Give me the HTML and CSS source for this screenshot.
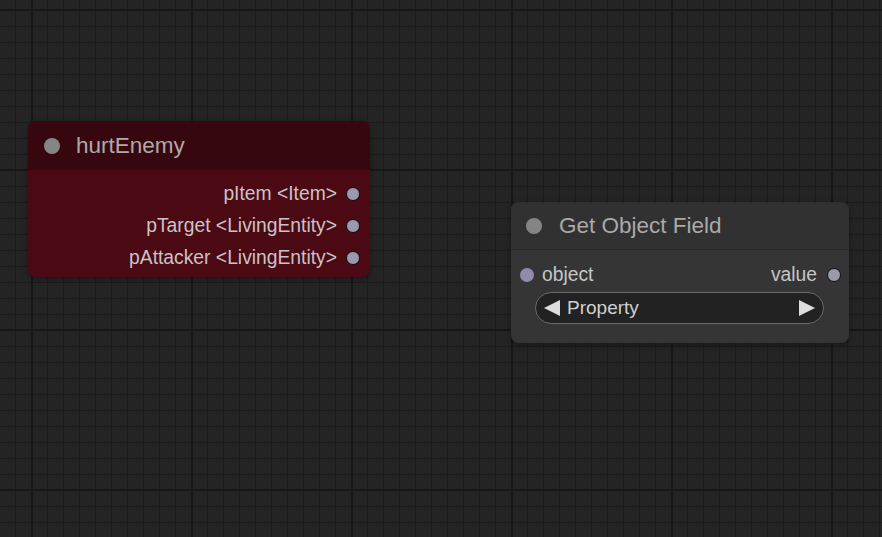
FILE: index.html
```html
<!DOCTYPE html>
<html lang="en">
<head>
    <meta charset="UTF-8">
    <meta name="viewport" content="width=device-width, initial-scale=1.0">
    <title>Graph Editor</title>
    <link rel="stylesheet" href="styles.css">
</head>
<body>
    <!-- Graph Canvas -->
    <div class="canvas">

        <!-- Event node -->
        <div class="node node-event">
            <div class="node-title">
                <span class="title-dot"></span>
                <span class="title-text">hurtEnemy</span>
            </div>
            <div class="node-body">
                <div class="slot slot-out">
                    <span class="slot-label">pItem &lt;Item&gt;</span>
                    <span class="slot-dot"></span>
                </div>
                <div class="slot slot-out">
                    <span class="slot-label">pTarget &lt;LivingEntity&gt;</span>
                    <span class="slot-dot"></span>
                </div>
                <div class="slot slot-out">
                    <span class="slot-label">pAttacker &lt;LivingEntity&gt;</span>
                    <span class="slot-dot"></span>
                </div>
            </div>
        </div>

        <!-- Field node -->
        <div class="node node-field">
            <div class="node-title">
                <span class="title-dot"></span>
                <span class="title-text">Get Object Field</span>
            </div>
            <div class="node-body">
                <div class="slot slot-both">
                    <div class="slot-in">
                        <span class="slot-dot dot-in"></span>
                        <span class="slot-label">object</span>
                    </div>
                    <div class="slot-in">
                        <span class="slot-label">value</span>
                        <span class="slot-dot"></span>
                    </div>
                </div>
                <div class="combo">
                    <svg class="arrow" width="16" height="16" viewBox="0 0 16 16"><polygon points="16,0 16,16 0,8" fill="#ddd"/></svg>
                    <span class="combo-text">Property</span>
                    <svg class="arrow arrow-right" width="16" height="16" viewBox="0 0 16 16"><polygon points="0,0 16,8 0,16" fill="#ddd"/></svg>
                </div>
            </div>
        </div>

    </div>
</body>
</html>
```

FILE: styles.css
```css
/* General Styles */
body {
    margin: 0;
    font-family: 'Liberation Sans', Arial, sans-serif;
    background: #222;
    overflow: hidden;
}

/* Canvas with big and small grid */
.canvas {
    position: relative;
    width: 882px;
    height: 537px;
    background-color: #242424;
    background-image:
        linear-gradient(90deg, #171717 2px, transparent 2px),
        linear-gradient(#171717 2px, transparent 2px),
        linear-gradient(90deg, #1b1b1b 1px, transparent 1px),
        linear-gradient(#1b1b1b 1px, transparent 1px);
    background-size: 160px 160px, 160px 160px, 16px 16px, 16px 16px;
    background-position: 31px 9px, 31px 9px, 15px 10px, 15px 10px;
}

/* Nodes */
.node {
    position: absolute;
    border-radius: 8px;
    overflow: hidden;
    box-shadow: 0 2px 6px rgba(0, 0, 0, 0.35);
}

.node-event {
    left: 28px;
    top: 121px;
    width: 342px;
    background: #4b0914;
}

.node-field {
    left: 511px;
    top: 202px;
    width: 338px;
    background: #353535;
}

.node-title {
    display: flex;
    align-items: center;
    height: 49px;
    padding-left: 16px;
    gap: 16px;
}

.node-event .node-title {
    background: #37070f;
}

.node-field .node-title {
    height: 48px;
    padding-left: 15px;
    gap: 17px;
    background: #313131;
    border-bottom: 1px solid #2a2a2a;
    box-sizing: border-box;
}

.title-dot {
    width: 16px;
    height: 16px;
    border-radius: 50%;
    background: #858585;
}

.title-text {
    font-size: 22.5px;
    color: #a9a9a9;
}

.node-event .title-text {
    color: #b0a8aa;
}

/* Slots */
.node-event .node-body {
    padding: 8px 10px 3px 0;
}

.slot {
    display: flex;
    align-items: center;
    height: 32px;
    font-size: 19.3px;
}

.slot-out {
    justify-content: flex-end;
    gap: 9px;
}

.slot-label {
    color: #c6c6c6;
}

.node-event .slot-label {
    color: #cbc2c4;
}

.slot-dot {
    width: 12px;
    height: 12px;
    border-radius: 50%;
    background: #9a9aac;
    border: 1px solid #111;
}

.dot-in {
    border-color: transparent;
    background: #8e8ca8;
}

.node-field .node-body {
    padding: 9px 8px 19px 9px;
}

.slot-both {
    justify-content: space-between;
}

.slot-in {
    display: flex;
    align-items: center;
    gap: 8px;
}

.slot-in:last-child {
    gap: 10px;
}

/* Combo widget */
.combo {
    display: flex;
    align-items: center;
    height: 32px;
    margin: 1px 17px 0 15px;
    padding: 0 8px;
    border: 1px solid #6a6a6a;
    border-radius: 17px;
    background: #222;
    box-sizing: border-box;
}

.combo-text {
    margin-left: 7px;
    font-size: 19px;
    color: #d0d0d0;
}

.arrow-right {
    margin-left: auto;
}
```
